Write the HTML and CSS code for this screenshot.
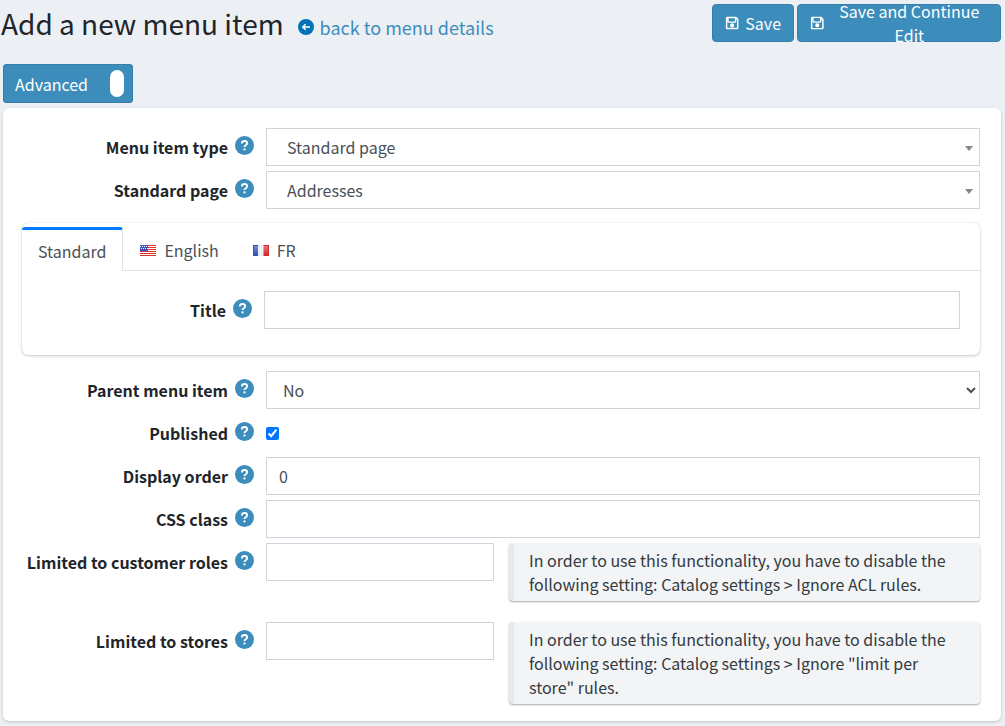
FILE: index.html
```html
<!DOCTYPE html>
<html lang="en">
<head>
<meta charset="utf-8">
<title>Add a new menu item</title>
<link rel="stylesheet" href="styles.css">
</head>
<body>
<svg class="defs" width="0" height="0" aria-hidden="true">
  <symbol id="save" viewBox="0 0 16 16">
    <path fill="currentColor" fill-rule="evenodd" d="M2.5 1h9.2c.4 0 .8.2 1.1.4l1.8 1.8c.3.3.4.7.4 1.1v9.2c0 .8-.7 1.5-1.500 1.500h-11C1.700 15 1 14.300 1 13.500v-11C1 1.700 1.700 1 2.500 1zM4 2.600v3.200c0 .3.200.5.500.5h6c.3 0 .5-.2.500-.5V2.800L10.800 2.600zM2.600 2.800v10.400c0 .1.100.2.200.2h10.400c.1 0 .2-.1.200-.2V4.600l-.9-.9v2.500c0 .8-.7 1.500-1.500 1.500H4.200c-.8 0-1.500-.7-1.500-1.500V2.800zM8 8.300a2.300 2.300 0 1 1 0 4.600 2.300 2.300 0 0 1 0-4.600z"/>
  </symbol>
  <symbol id="help" viewBox="0 0 19 19">
    <circle cx="9.500" cy="9.500" r="9.500" fill="#3c8dbc"/>
    <path fill="none" stroke="#fff" stroke-width="1.900" d="M6.900 7.400c0-1.500 1.100-2.400 2.600-2.400s2.600.9 2.600 2.200c0 1.100-.7 1.600-1.400 2.100-.8.500-1.200.9-1.200 1.800"/>
    <rect x="8.500" y="12.400" width="2" height="2" fill="#fff"/>
  </symbol>
  <linearGradient id="shine" x1="0" y1="0" x2="0" y2="1">
    <stop offset="0" stop-color="#fff" stop-opacity=".35"/>
    <stop offset="1" stop-color="#fff" stop-opacity="0"/>
  </linearGradient>
</svg>

<header class="page-head">
  <div class="title-group">
    <h1 class="page-title">Add a new menu item</h1>
    <a class="back-link" href="#">
      <svg class="back-icon" viewBox="0 0 16 16" aria-hidden="true">
        <circle cx="8" cy="8" r="8" fill="#0073b7"/>
        <path fill="none" stroke="#fff" stroke-width="1.500" d="M12 8H5M7.600 5.200 4.800 8l2.800 2.800"/>
      </svg>
      <span>back to menu details</span>
    </a>
  </div>
  <div class="actions">
    <button class="btn btn-save" type="button"><svg class="btn-icon"><use href="#save"/></svg>Save</button>
    <button class="btn btn-continue" type="button"><svg class="btn-icon"><use href="#save"/></svg>Save and Continue Edit</button>
  </div>
</header>

<div class="advanced">
  <span>Advanced</span>
  <span class="knob"></span>
</div>

<main class="card">
  <div class="row">
    <label class="label"><span>Menu item type</span><svg class="help"><use href="#help"/></svg></label>
    <div class="combo"><span>Standard page</span><i class="caret"></i></div>
  </div>
  <div class="row">
    <label class="label"><span>Standard page</span><svg class="help"><use href="#help"/></svg></label>
    <div class="combo"><span>Addresses</span><i class="caret"></i></div>
  </div>

  <section class="tabs">
    <nav class="tab-bar">
      <span class="tab tab-active">Standard</span>
      <span class="tab">
        <svg class="flag" viewBox="0 0 16 11" aria-hidden="true">
          <rect width="16" height="11" fill="#fff"/>
          <path fill="#d8362a" d="M0 0h16v1H0zM0 2h16v1H0zM0 4h16v1H0zM0 6h16v1H0zM0 8h16v1H0zM0 10h16v1H0z"/>
          <rect width="8" height="6" fill="#3f51c8"/>
          <path stroke="#fff" stroke-dasharray="1 1" d="M0 1.500h8M1 3.500h7"/>
        </svg>
        English
      </span>
      <span class="tab">
        <svg class="flag" viewBox="0 0 16 11" aria-hidden="true">
          <rect width="5.500" height="11" fill="#3350b5"/>
          <rect x="5" width="6" height="11" fill="#e8ecf6"/>
          <rect x="10.500" width="5.500" height="11" fill="#d92a2a"/>
          <rect x="1" y="1" width="14" height="9" fill="url(#shine)"/>
        </svg>
        FR
      </span>
    </nav>
    <div class="tab-body">
      <label class="label label-tab"><span>Title</span><svg class="help"><use href="#help"/></svg></label>
      <input class="field" type="text">
    </div>
  </section>

  <div class="row">
    <label class="label"><span>Parent menu item</span><svg class="help"><use href="#help"/></svg></label>
    <select class="field native"><option>No</option></select>
  </div>
  <div class="row">
    <label class="label"><span>Published</span><svg class="help"><use href="#help"/></svg></label>
    <input class="check" type="checkbox" checked>
  </div>
  <div class="row">
    <label class="label"><span>Display order</span><svg class="help"><use href="#help"/></svg></label>
    <input class="field" type="text" value="0">
  </div>
  <div class="row">
    <label class="label"><span>CSS class</span><svg class="help"><use href="#help"/></svg></label>
    <input class="field" type="text">
  </div>
  <div class="row row-note">
    <label class="label"><span>Limited to customer roles</span><svg class="help"><use href="#help"/></svg></label>
    <input class="field field-short" type="text">
    <p class="note">In order to use this functionality, you have to disable the following setting: Catalog settings &gt; Ignore ACL rules.</p>
  </div>
  <div class="row row-note">
    <label class="label"><span>Limited to stores</span><svg class="help"><use href="#help"/></svg></label>
    <input class="field field-short" type="text">
    <p class="note">In order to use this functionality, you have to disable the following setting: Catalog settings &gt; Ignore "limit per store" rules.</p>
  </div>
</main>
</body>
</html>
```
FILE: styles.css
```css
* { box-sizing: border-box; }
html, body { height: 100%; }
body {
  margin: 0;
  background: #ecf0f5;
  color: #212529;
  font-family: "Noto Sans CJK SC", "Noto Sans", sans-serif;
  font-size: 16px;
  line-height: 24px;
  overflow: hidden;
}
.defs { position: absolute; }

.page-head {
  display: flex;
  justify-content: space-between;
  align-items: flex-start;
  height: 64px;
  padding: 4px 4px 0 1px;
}
.title-group { display: flex; align-items: baseline; gap: 14px; }
.page-title {
  margin: 0;
  font-size: 28px;
  line-height: 38px;
  font-weight: 400;
}
.back-link {
  display: inline-flex;
  align-items: center;
  gap: 6px;
  color: #3c8dbc;
  font-size: 18px;
  text-decoration: none;
}
.back-icon { width: 16px; height: 16px; }
.actions { display: flex; gap: 3px; }
.btn {
  display: inline-flex;
  align-items: center;
  justify-content: center;
  height: 38px;
  padding: 0 12px;
  gap: 6px;
  background: #3c8dbc;
  border: 1px solid #367fa9;
  border-radius: 4px;
  color: #fff;
  font: inherit;
}
.btn-save { width: 82px; }
.btn-continue { width: 204px; }
.btn-icon { width: 16px; height: 16px; }

.advanced {
  display: flex;
  align-items: center;
  justify-content: space-between;
  width: 130px;
  height: 39px;
  margin-left: 3px;
  padding: 0 8px 0 11px;
  background: #3c8dbc;
  border: 1px solid #367fa9;
  border-radius: 3px;
  color: #fff;
}
.knob {
  width: 14px;
  height: 27px;
  background: #fff;
  border-radius: 7px;
}

.card {
  height: 613px;
  margin: 5px 4px 0 3px;
  padding: 20px 21px 0 19px;
  background: #fff;
  border-radius: 6px;
  box-shadow: 0 1px 3px rgba(0, 0, 0, .2);
}
.row {
  display: flex;
  align-items: center;
  height: 38px;
  margin-bottom: 5px;
}
.row-note {
  align-items: flex-start;
  height: auto;
  margin-bottom: 21px;
}
.row-note .label { height: 38px; }
.label {
  display: flex;
  flex: none;
  align-items: center;
  justify-content: flex-end;
  width: 244px;
  padding-right: 12px;
  gap: 7px;
  font-weight: 600;
}
.help { flex: none; width: 19px; height: 19px; margin-top: -3px; }

.field, .combo {
  flex: 1;
  height: 38px;
  min-width: 0;
  background: #fff;
  border: 1px solid #ced4da;
  color: #495057;
  font: inherit;
}
.field { padding: 0 12px; }
.combo {
  position: relative;
  display: flex;
  align-items: center;
  padding-left: 20px;
}
.caret {
  position: absolute;
  right: 6px;
  top: 17px;
  border: 4px solid transparent;
  border-top: 5px solid #888;
  border-bottom: 0;
}
.native { padding-left: 12px; }
.check { width: 13px; height: 13px; margin: 0; accent-color: #0075ff; }
.field-short { flex: none; width: 228px; }

.note {
  width: 471px;
  margin: 0 0 0 15px;
  padding: 5px 16px 5px 15px;
  background: #f3f4f6;
  border-left: 5px solid #e7eaec;
  border-radius: 4px;
  box-shadow: 0 1px 2px rgba(0, 0, 0, .35);
  color: #343a40;
  line-height: 24px;
}

.tabs {
  margin: 14px 0 16px;
  height: 132px;
  border-radius: 6px;
  box-shadow: 0 0 1px rgba(0, 0, 0, .2), 0 1px 3px rgba(0, 0, 0, .2);
}
.tab-bar {
  display: flex;
  height: 48px;
  padding-top: 4px;
  border-bottom: 1px solid #dee2e6;
}
.tab {
  display: flex;
  align-items: center;
  padding: 3px 17px 0;
  gap: 8px;
  color: #495057;
}
.tab-active {
  margin-bottom: -1px;
  padding: 0 16px;
  background: #fff;
  border-top: 3px solid #007bff;
  border-right: 1px solid #dee2e6;
  border-radius: 3px 3px 0 0;
}
.flag { width: 16px; height: 11px; }
.tab-body {
  display: flex;
  align-items: flex-start;
  padding: 20px 20px 0 0;
}
.label-tab { width: 242px; padding-right: 12px; height: 38px; }
.label-tab + .field { flex: 1; }
```
